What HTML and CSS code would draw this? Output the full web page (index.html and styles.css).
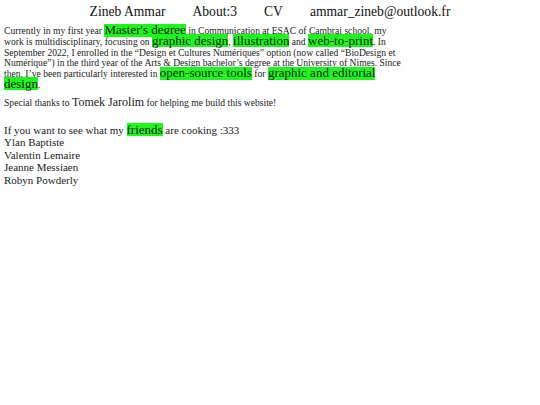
FILE: index.html
```html
<!DOCTYPE html>
<html lang="en">
<head>
<meta charset="utf-8">
<title>Zineb Ammar</title>
<link rel="stylesheet" href="styles.css">
</head>
<body>
<nav class="nav">
  <a class="nav-item" href="#">Zineb Ammar</a>
  <a class="nav-item" href="#">About:3</a>
  <a class="nav-item" href="#">CV</a>
  <a class="nav-item" href="#">ammar_zineb@outlook.fr</a>
</nav>
<main class="content">
  <p class="intro">Currently in my first year <span class="hl">Master's degree</span> in Communication at ESAC of Cambrai school, my work is multidisciplinary, focusing on <span class="hl">graphic design</span>, <span class="hl">illustration</span> and <span class="hl">web-to-print</span>. In September 2022, I enrolled in the “Design et Cultures Numériques” option (now called “BioDesign et Numérique”) in the third year of the Arts &amp; Design bachelor’s degree at the University of Nimes. Since then, I’ve been particularly interested in <span class="hl">open-source tools</span> for <span class="hl">graphic and editorial design</span>.</p>
  <p class="thanks">Special thanks to <span class="big">Tomek Jarolim</span> for helping me build this website!</p>
  <section class="friends">
    <p class="friends-title">If you want to see what my <span class="hl">friends</span> are cooking :333</p>
    <ul class="friends-list">
      <li>Ylan Baptiste</li>
      <li>Valentin Lemaire</li>
      <li>Jeanne Messiaen</li>
      <li>Robyn Powderly</li>
    </ul>
  </section>
</main>
</body>
</html>
```
FILE: styles.css
```css
html, body {
  margin: 0;
  padding: 0;
  background: #fff;
}
body {
  font-family: "Liberation Serif", "DejaVu Serif", serif;
  color: #222;
  padding: 3px 4px;
}
.nav {
  display: flex;
  justify-content: center;
  gap: 27px;
  font-size: 13.6px;
  line-height: 18px;
}
.nav-item {
  color: #111;
  text-decoration: none;
}
.content {
  margin-top: 5px;
}
.intro {
  width: 403px;
  margin: 0;
  font-size: 9.6px;
  line-height: 10.8px;
}
.hl {
  background: linear-gradient(#1ef51e, #1ef51e) 0 1.5px / 100% 13px no-repeat;
  color: #0d1f0d;
  font-size: 13px;
}
.intro .hl {
  line-height: 8px;
}
.thanks {
  margin: 4px 0 0;
  font-size: 9.6px;
  line-height: 14px;
}
.big {
  font-size: 12px;
}
.friends {
  margin-top: 14px;
  font-size: 11px;
  line-height: 12.5px;
}
.friends-title {
  margin: 0;
}
.friends-title .hl {
  font-size: 13px;
}
.friends-list {
  list-style: none;
  margin: 0;
  padding: 0;
}
```
